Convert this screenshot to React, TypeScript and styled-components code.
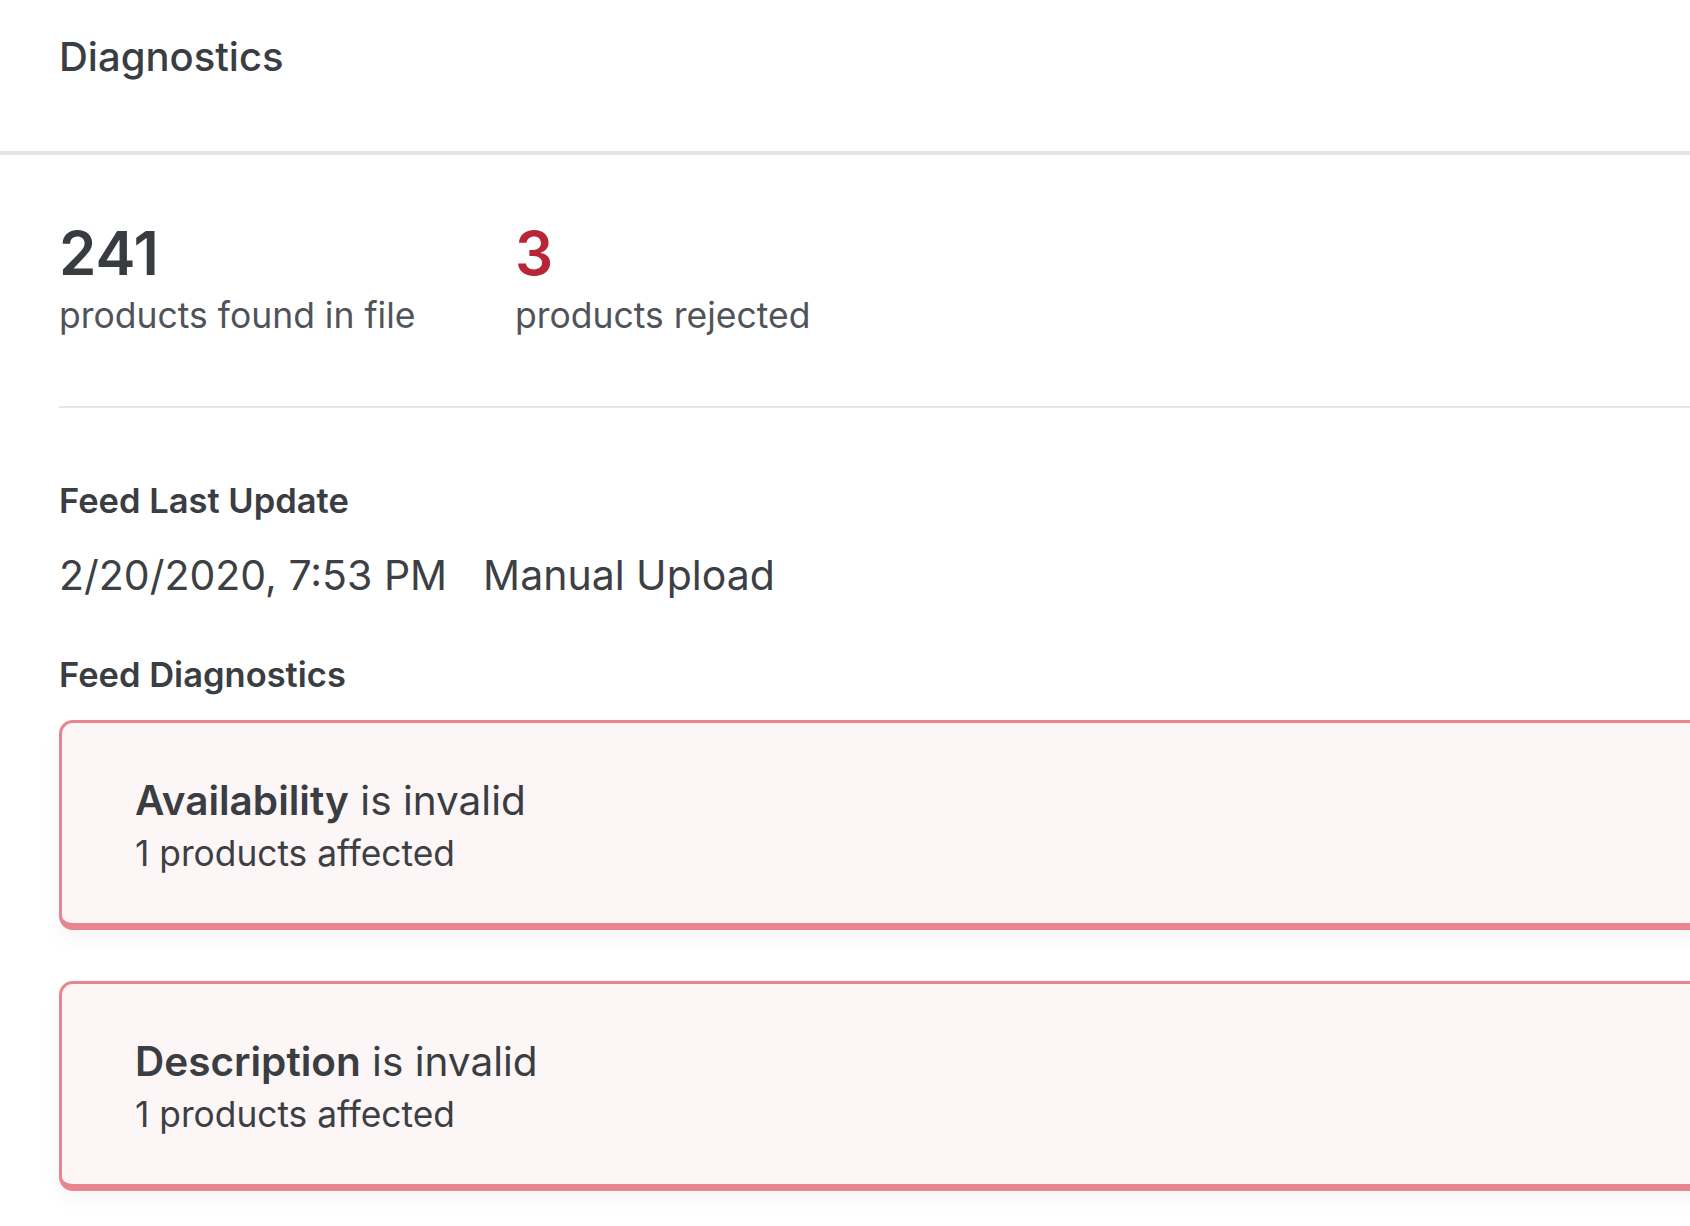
import React from 'react';
import styled, { createGlobalStyle } from 'styled-components';

// Diagnostic issue shown as a card
interface Issue {
  field: string;
  affected: number;
}

const issues: Issue[] = [
  { field: 'Availability', affected: 1 },
  { field: 'Description', affected: 1 },
];

const GlobalStyle = createGlobalStyle`
  html, body {
    margin: 0;
    padding: 0;
    background: #ffffff;
  }
  body {
    font-family: Inter, "Noto Sans", sans-serif;
    color: #3a3d42;
    -webkit-font-smoothing: antialiased;
  }
`;

// Styled components
const Page = styled.div`
  width: 100%;
  min-height: 1226px;
  overflow: hidden;
  background: #ffffff;
`;

const Header = styled.header`
  padding: 33px 0 70px 59px;
  border-bottom: 4px solid #e1e3e8;
`;

const Title = styled.h1`
  margin: 0;
  font-size: 40px;
  line-height: 48px;
  font-weight: 500;
  color: #3a3d42;
`;

const Body = styled.main`
  padding-left: 59px;
`;

const Stats = styled.section`
  display: flex;
  padding: 62px 0 69px;
  border-bottom: 2px solid #e4e6ea;
`;

const Stat = styled.div`
  width: 456px;
  display: flex;
  flex-direction: column;
  gap: 6px;
`;

const StatValue = styled.span<{ $danger?: boolean }>`
  font-size: 60px;
  line-height: 72px;
  font-weight: 600;
  color: ${(p) => (p.$danger ? '#b72536' : '#383b40')};
`;

const StatLabel = styled.span`
  font-size: 35.5px;
  line-height: 42px;
  font-weight: 400;
  color: #50545a;
`;

const SectionLabel = styled.h2<{ $top: number }>`
  margin: ${(p) => p.$top}px 0 0;
  font-size: 34.5px;
  line-height: 40px;
  font-weight: 600;
  color: #3a3d42;
`;

const UpdateRow = styled.div`
  display: flex;
  gap: 36px;
  margin-top: 30px;
  font-size: 41px;
  line-height: 48px;
  color: #3c3f44;
`;

const CardList = styled.div`
  display: flex;
  flex-direction: column;
  gap: 51px;
  margin-top: 25px;
  margin-right: -60px;
  padding-bottom: 40px;
`;

const Card = styled.div`
  background: #fcf6f6;
  border: 3px solid #e8858f;
  border-bottom-width: 7px;
  border-radius: 14px;
  padding: 54px 0 48px 73px;
  box-shadow: 0 8px 20px rgba(0, 0, 0, 0.045);
`;

const CardTitle = styled.div`
  font-size: 40.5px;
  line-height: 48px;
  color: #3a3d42;

  strong {
    font-weight: 600;
  }
`;

const CardSub = styled.div`
  margin-top: 8px;
  font-size: 35.3px;
  line-height: 42px;
  color: #3c3f44;
`;

const App: React.FC = () => {
  return (
    <Page>
      <GlobalStyle />
      <Header>
        <Title>Diagnostics</Title>
      </Header>
      <Body>
        <Stats>
          <Stat>
            <StatValue>241</StatValue>
            <StatLabel>products found in file</StatLabel>
          </Stat>
          <Stat>
            <StatValue $danger>3</StatValue>
            <StatLabel>products rejected</StatLabel>
          </Stat>
        </Stats>

        <SectionLabel $top={73}>Feed Last Update</SectionLabel>
        <UpdateRow>
          <span>2/20/2020, 7:53 PM</span>
          <span>Manual Upload</span>
        </UpdateRow>

        <SectionLabel $top={56}>Feed Diagnostics</SectionLabel>
        <CardList>
          {issues.map((issue) => (
            <Card key={issue.field}>
              <CardTitle>
                <strong>{issue.field}</strong> is invalid
              </CardTitle>
              <CardSub>{issue.affected} products affected</CardSub>
            </Card>
          ))}
        </CardList>
      </Body>
    </Page>
  );
};

export default App;
